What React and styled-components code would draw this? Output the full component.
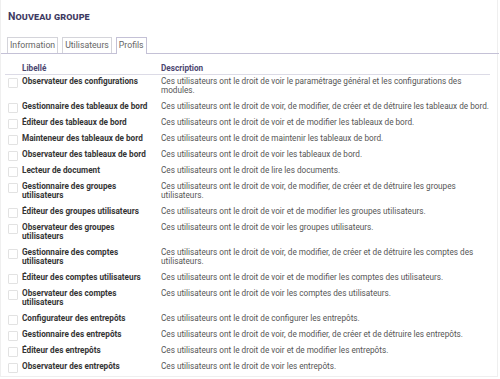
import React from 'react';
import styled, { createGlobalStyle } from 'styled-components';

const GlobalStyle = createGlobalStyle`
  body {
    margin: 0;
    background: #fff;
    font-family: Roboto, "Liberation Sans", sans-serif;
  }
`;

const Panel = styled.div`
  width: 498px;
  height: 377px;
  box-sizing: border-box;
  border: 1px solid #efefef;
  border-top: none;
`;

const Title = styled.h1`
  margin: 0;
  padding: 11px 7px 0;
  height: 27px;
  box-sizing: border-box;
  font-size: 10.5px;
  line-height: 12px;
  font-weight: 700;
  font-variant: small-caps;
  letter-spacing: 0.1px;
  color: #3e3a62;
`;

const TabBar = styled.div`
  display: flex;
  align-items: flex-end;
  gap: 4px;
  height: 26px;
  padding: 0 6px;
  margin-right: -2px;
  border-bottom: 1px solid #c4c1d6;
`;

const Tab = styled.div`
  box-sizing: border-box;
  padding: 0 2px;
  font-size: 8.7px;
  line-height: 15px;
  color: #666;
  background: #fff;
  border: 1px solid ${({ $active }) => ($active ? '#c4c1d6' : '#d4d4da')};
  border-bottom: none;
  margin-bottom: ${({ $active }) => ($active ? '-1px' : '0')};
  height: ${({ $active }) => ($active ? '17px' : '16px')};
`;

const List = styled.div`
  margin: 8.5px 0 0 4px;
  width: 485px;
`;

const Row = styled.div`
  display: grid;
  grid-template-columns: 17px 139px 1fr;
  align-items: start;
  font-size: 8.2px;
  line-height: 9px;
  padding: 2px 0 5px;
`;

const HeadRow = styled(Row)`
  padding: 0 0 1px;
  border-bottom: 1px solid #dcdbe6;
  line-height: 10px;
  font-weight: 700;
  color: #4b4670;
`;

const Label = styled.div`
  font-weight: 700;
  color: #353535;
  padding-right: 8px;
`;

const Desc = styled.div`
  color: #555;
`;

const Box = styled.span`
  display: block;
  width: 8px;
  height: 8px;
  margin: 1px 0 -4px 3px;
  border: 1px solid #e2e2e2;
  border-radius: 1px;
  background: #fff;
`;

const profiles = [
  ['Observateur des configurations', 'Ces utilisateurs ont le droit de voir le paramétrage général et les configurations des modules.'],
  ['Gestionnaire des tableaux de bord', 'Ces utilisateurs ont le droit de voir, de modifier, de créer et de détruire les tableaux de bord.'],
  ['Éditeur des tableaux de bord', 'Ces utilisateurs ont le droit de voir et de modifier les tableaux de bord.'],
  ['Mainteneur des tableaux de bord', 'Ces utilisateurs ont le droit de maintenir les tableaux de bord.'],
  ['Observateur des tableaux de bord', 'Ces utilisateurs ont le droit de voir les tableaux de bord.'],
  ['Lecteur de document', 'Ces utilisateurs ont le droit de lire les documents.'],
  ['Gestionnaire des groupes utilisateurs', 'Ces utilisateurs ont le droit de voir, de modifier, de créer et de détruire les groupes utilisateurs.'],
  ['Éditeur des groupes utilisateurs', 'Ces utilisateurs ont le droit de voir et de modifier les groupes utilisateurs.'],
  ['Observateur des groupes utilisateurs', 'Ces utilisateurs ont le droit de voir les groupes utilisateurs.'],
  ['Gestionnaire des comptes utilisateurs', 'Ces utilisateurs ont le droit de voir, de modifier, de créer et de détruire les comptes des utilisateurs.'],
  ['Éditeur des comptes utilisateurs', 'Ces utilisateurs ont le droit de voir et de modifier les comptes des utilisateurs.'],
  ['Observateur des comptes utilisateurs', 'Ces utilisateurs ont le droit de voir les comptes des utilisateurs.'],
  ['Configurateur des entrepôts', 'Ces utilisateurs ont le droit de configurer les entrepôts.'],
  ['Gestionnaire des entrepôts', 'Ces utilisateurs ont le droit de voir, de modifier, de créer et de détruire les entrepôts.'],
  ['Éditeur des entrepôts', 'Ces utilisateurs ont le droit de voir et de modifier les entrepôts.'],
  ['Observateur des entrepôts', 'Ces utilisateurs ont le droit de voir les entrepôts.'],
];

const App = () => (
  <>
    <GlobalStyle />
    <Panel>
      <Title>Nouveau groupe</Title>
      <TabBar>
        <Tab>Information</Tab>
        <Tab>Utilisateurs</Tab>
        <Tab $active>Profils</Tab>
      </TabBar>
      <List>
        <HeadRow>
          <span />
          <span>Libellé</span>
          <span>Description</span>
        </HeadRow>
        {profiles.map(([label, desc]) => (
          <Row key={label}>
            <Box />
            <Label>{label}</Label>
            <Desc>{desc}</Desc>
          </Row>
        ))}
      </List>
    </Panel>
  </>
);

export default App;
